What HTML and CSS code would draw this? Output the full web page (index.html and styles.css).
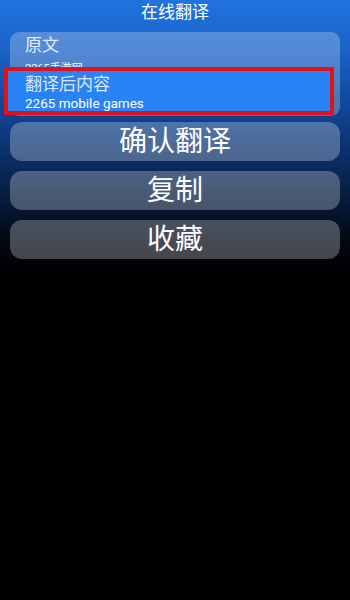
FILE: index.html
```html
<!DOCTYPE html>
<html lang="zh-CN">
<head>
    <meta charset="UTF-8">
    <title>在线翻译</title>
    <link rel="stylesheet" href="styles.css">
</head>
<body>
    <div class="screen">
        <div class="title">在线翻译</div>
        <div class="panel">
            <div class="item">
                <div class="item-label">原文</div>
                <div class="item-text small">2265手游网</div>
            </div>
            <div class="item selected">
                <div class="item-label">翻译后内容</div>
                <div class="item-text">2265 mobile games</div>
            </div>
        </div>
        <div class="actions">
            <button class="action">确认翻译</button>
            <button class="action">复制</button>
            <button class="action">收藏</button>
        </div>
    </div>
</body>
</html>
```

FILE: styles.css
```css
body {
    margin: 0;
    padding: 0;
    background: #000;
    font-family: Roboto, "Noto Sans CJK SC", sans-serif;
    color: #fff;
}
.screen {
    height: 600px;
    background: linear-gradient(to bottom, #2173df 0px, #1a63c8 50px, #0f4291 115px, #08244f 180px, #030a18 235px, #000 270px);
}
.title {
    height: 28px;
    line-height: 24px;
    text-align: center;
    font-size: 17px;
    color: #fff;
}
.panel {
    margin: 4px 10px 0;
    height: 84px;
    background: rgba(255, 255, 255, 0.25);
    border-radius: 9px;
}
.item {
    padding: 0 15px;
    height: 35px;
    overflow: hidden;
}
.item-label {
    font-size: 17px;
    line-height: 22px;
    padding-top: 2px;
    color: #e4ecf8;
}
.item-text {
    font-size: 13.5px;
    line-height: 16px;
}
.item-text.small {
    font-size: 11px;
    margin-top: 5px;
}
.item.selected {
    position: relative;
    margin: 0 6px 0 -6px;
    height: auto;
    padding: 2px 0 0 17px;
    border: 4px solid #e0121c;
    background: #2a83f5;
}
.item.selected .item-label {
    color: #dce8fb;
    padding-top: 0;
}
.actions {
    display: flex;
    flex-direction: column;
    gap: 10px;
    padding: 6px 10px 0;
}
.action {
    height: 39px;
    border: none;
    border-radius: 12px;
    background: rgba(255, 255, 255, 0.27);
    color: #fff;
    font-family: Roboto, "Noto Sans CJK SC", sans-serif;
    font-size: 28px;
    line-height: 39px;
    padding: 0;
}
```
